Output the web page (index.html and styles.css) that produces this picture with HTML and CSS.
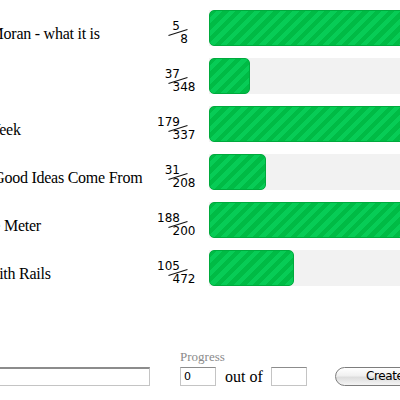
FILE: index.html
```html
<!DOCTYPE html>
<html>
<head>
<meta charset="utf-8">
<title>Progress</title>
<link rel="stylesheet" href="styles.css">
</head>
<body>
<div class="page">
  <div class="list">
    <div class="row">
      <div class="title">Dylan Moran - what it is</div>
      <div class="frac"><div class="num">5</div><span class="slash"></span><div class="den">8</div></div>
      <div class="bar"><div class="fill" style="width:62.5%"></div></div>
    </div>
    <div class="row">
      <div class="title">Rework</div>
      <div class="frac"><div class="num">37</div><span class="slash"></span><div class="den">348</div></div>
      <div class="bar"><div class="fill" style="width:10.63%"></div></div>
    </div>
    <div class="row">
      <div class="title">Work Week</div>
      <div class="frac"><div class="num">179</div><span class="slash"></span><div class="den">337</div></div>
      <div class="bar"><div class="fill" style="width:53.12%"></div></div>
    </div>
    <div class="row">
      <div class="title">Where Good Ideas Come From</div>
      <div class="frac"><div class="num">31</div><span class="slash"></span><div class="den">208</div></div>
      <div class="bar"><div class="fill" style="width:14.9%"></div></div>
    </div>
    <div class="row">
      <div class="title">Pressure Meter</div>
      <div class="frac"><div class="num">188</div><span class="slash"></span><div class="den">200</div></div>
      <div class="bar"><div class="fill" style="width:94%"></div></div>
    </div>
    <div class="row">
      <div class="title">Blogs with Rails</div>
      <div class="frac"><div class="num">105</div><span class="slash"></span><div class="den">472</div></div>
      <div class="bar"><div class="fill" style="width:22.25%"></div></div>
    </div>
  </div>
  <form class="form">
    <div class="field field-title">
      <label class="label">Title</label>
      <input class="input input-title" type="text">
    </div>
    <div class="field field-progress">
      <label class="label">Progress</label>
      <input class="input input-num" type="text" value="0">
    </div>
    <span class="outof">out of</span>
    <input class="input input-num input-total" type="text">
    <button class="button" type="button">Create</button>
  </form>
</div>
</body>
</html>
```

FILE: styles.css
```css
html, body {
  margin: 0;
  padding: 0;
  background: #fff;
}
body {
  width: 400px;
  height: 400px;
  overflow: hidden;
  font-family: "Liberation Serif", "Times New Roman", serif;
  color: #000;
}
.page {
  margin-left: -52px;
  width: 700px;
}
.list {
  padding-top: 10px;
}
.row {
  display: flex;
  align-items: flex-start;
  height: 36px;
  margin-bottom: 12px;
}
.title {
  flex: none;
  width: 200px;
  white-space: nowrap;
  font-size: 16px;
  letter-spacing: -0.25px;
  line-height: 20px;
  padding-top: 14px;
}
.frac {
  flex: none;
  width: 46px;
  height: 36px;
  position: relative;
  font-family: "DejaVu Sans", sans-serif;
  font-size: 12px;
  line-height: 14px;
  color: #000;
}
.num {
  margin-top: 9px;
  padding-right: 14px;
  text-align: right;
}
.den {
  width: 24px;
  margin-left: auto;
  margin-right: -2px;
  margin-top: -1px;
  text-align: center;
}
.slash {
  position: absolute;
  left: 20px;
  top: 22px;
  width: 20px;
  height: 1.2px;
  background: #111;
  transform: rotate(-18deg);
}
.bar {
  flex: none;
  width: 384px;
  height: 36px;
  margin-left: 15px;
  background: #f2f2f2;
}
.fill {
  box-sizing: border-box;
  height: 36px;
  border: 1px solid #00aa3d;
  border-radius: 5px;
  background: repeating-linear-gradient(135deg, #00bb45 0, #00bb45 4.5px, #07cc56 4.5px, #07cc56 9px);
}
.form {
  display: flex;
  align-items: flex-end;
  margin: 63px 0 0 0;
}
.field {
  display: flex;
  flex-direction: column;
}
.label {
  font-size: 13px;
  line-height: 15px;
  color: #8a8a8a;
  margin-bottom: 3px;
  white-space: nowrap;
}
.field-title .label {
  visibility: hidden;
}
.input {
  box-sizing: border-box;
  height: 19px;
  margin: 0;
  border: 1px solid #c4c4c4;
  border-top-color: #8c8c8c;
  background: #fff;
  padding: 0 3px;
  font-family: "DejaVu Sans", sans-serif;
  font-size: 11px;
  color: #000;
  outline: none;
}
.input-title {
  width: 202px;
  border-top: 2px solid #8c8c8c;
}
.field-progress {
  width: 36px;
  margin-left: 30px;
}
.input-num {
  width: 36px;
}
.outof {
  font-size: 16px;
  line-height: 19px;
  margin: 0 8px 0 9px;
}
.button {
  box-sizing: border-box;
  width: 100px;
  height: 19px;
  margin-left: 28px;
  padding: 0;
  border: 1px solid #7d7d7d;
  border-radius: 10px;
  background: linear-gradient(#ffffff, #f0f0f0 45%, #dddddd 55%, #f4f4f4);
  font-family: "DejaVu Sans", sans-serif;
  font-size: 12px;
  letter-spacing: -0.4px;
  line-height: 17px;
  color: #000;
}
```
